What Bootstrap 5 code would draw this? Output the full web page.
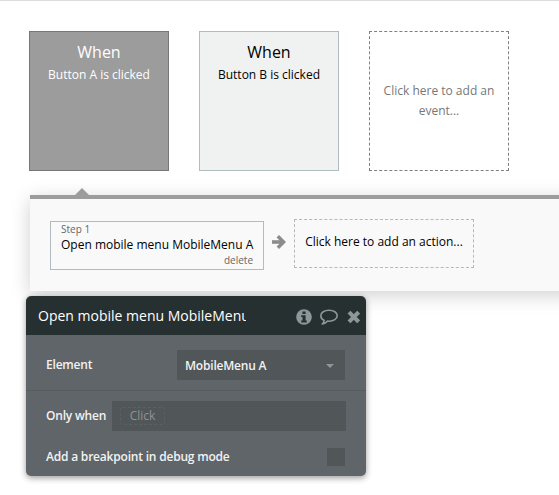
<!DOCTYPE html>
<html lang="en">
<head>
<meta charset="utf-8">
<meta name="viewport" content="width=device-width, initial-scale=1">
<title>Workflow editor</title>
<link href="https://cdn.jsdelivr.net/npm/bootstrap@5.3.0/dist/css/bootstrap.min.css" rel="stylesheet">
<style>
body{font-family:"Open Sans",sans-serif;font-size:12px;line-height:20px;color:#000;background:#fff;height:495px;overflow:hidden;border-top:1px solid #ddd}
.events{gap:30px;padding:30px 0 0 29px}
.event{width:140px;height:140px;border:1px solid #b1bcc0;background:#f0f2f1;padding-top:9px}
.event.active{background:#9c9c9c;border-color:#777;color:#fff}
.event.new{background:#fff;border:1px dashed #808080;color:#777;padding:0 10px}
.event-title{font-size:16px;line-height:22px}
.event-text{line-height:22px;margin-top:1px}
.caret-row{height:24px;padding-left:75px}
.caret-up{width:14px;height:7px;background:#9c9c9c;clip-path:polygon(50% 0,100% 100%,0 100%)}
.actions{margin-left:30px;margin-right:-20px;height:96px;border-top:4px solid #9c9c9c;background:#f9f9f9;box-shadow:0 4px 18px rgba(0,0,0,.19);padding:20px 0 0 20px}
.step{width:214px;height:49px;border:1px solid #b1bcc0;margin-top:2px;padding:0 10px}
.step-no{font-size:10px;line-height:15px;color:#666}
.step-name{line-height:16px}
.step-del{font-size:10px;line-height:14px;color:#666}
.arrow{width:30px;height:45px}
.step-new{width:180px;height:49px;border:1px dashed #b5b9bb}
.editor{width:340px;height:180px;margin:5px 0 0 26px;border-radius:5px;background:#5f6568;box-shadow:0 2px 6px rgba(0,0,0,.4);color:#f2f2f2;font-weight:600;letter-spacing:-.2px}
.editor-head{height:39px;background:#273031;padding:0 6px 0 12px;color:#fff;font-weight:400;letter-spacing:0}
.editor-title{font-size:14px;width:208px}
.editor-tools{padding-top:2px}
.editor-row{padding-left:20px;padding-right:21px}
.row-element{height:56px;border-bottom:1px solid #565b5e;padding-top:5px}
.row-when{height:50px;padding-right:20px}
.row-break{height:32px}
.pick{width:168px;height:30px;background:#515658;padding:2px 11px 0 8px}
.expr{width:234px;height:30px;background:#515658;padding-left:8px}
.expr span{width:45px;height:18px;border:1px dashed #5b6063;border-radius:3px;color:#929292;font-weight:400;letter-spacing:0}
.tick{width:18px;height:18px;background:#515658}
</style>
<script src="https://cdn.jsdelivr.net/npm/bootstrap@5.3.0/dist/js/bootstrap.bundle.min.js"></script>
</head>
<body>
<div class="events d-flex">
  <div class="event active text-center"><div class="event-title">When</div><div class="event-text">Button A is clicked</div></div>
  <div class="event text-center"><div class="event-title">When</div><div class="event-text">Button B is clicked</div></div>
  <div class="event new text-center d-flex align-items-center justify-content-center">Click here to add an event...</div>
</div>
<div class="caret-row d-flex align-items-end"><div class="caret-up"></div></div>
<div class="actions d-flex align-items-start">
  <div class="step">
    <div class="step-no">Step 1</div>
    <div class="step-name text-nowrap">Open mobile menu MobileMenu A</div>
    <div class="step-del text-end">delete</div>
  </div>
  <div class="arrow d-flex align-items-center justify-content-center">
    <svg width="14" height="14" viewBox="0 0 14 14" fill="none" stroke="#8c8c8c"><path d="M0 7h11" stroke-width="3.6"/><path d="M5.800 1.200L11.600 7l-5.800 5.800" stroke-width="3.400"/></svg>
  </div>
  <div class="step-new d-flex align-items-center justify-content-center text-nowrap"><span class="pb-1">Click here to add an action...</span></div>
</div>
<div class="editor">
  <div class="editor-head d-flex align-items-center rounded-top position-relative">
    <div class="editor-title text-nowrap overflow-hidden">Open mobile menu MobileMenu A</div>
    <div class="editor-tools d-flex align-items-center ms-auto">
      <svg width="16" height="16" viewBox="0 0 16 16"><circle cx="8" cy="8" r="7.8" fill="#8d979a"/><path d="M6.400 2.500h3.200v2.400H6.400zM5.200 6.200h4.400v5.200h1.200v2H5.200v-2h1.300V8.100H5.200z" fill="#273031"/></svg>
      <svg class="ms-2" width="18" height="16" viewBox="0 0 18 16" fill="none" stroke="#8d979a" stroke-width="1.600" stroke-linejoin="round"><path d="M9 1.200c4.600 0 8.200 2.400 8.200 5.500s-3.600 5.500-8.200 5.500l-1.500-.1C6 13.600 4.200 14.800 2.200 15c1.100-1 1.800-2 2-3.600C2.100 10.400.8 8.700.8 6.700.8 3.600 4.400 1.200 9 1.200z"/></svg>
      <svg width="22" height="14" viewBox="-9 0 22 14" stroke="#8d979a" stroke-width="4"><path d="M2 2.200l9.600 9.600M11.600 2.200L2 11.800"/></svg>
    </div>
  </div>
  <div class="editor-row row-element d-flex align-items-center justify-content-between">
    <span>Element</span>
    <div class="pick d-flex align-items-center justify-content-between"><span>MobileMenu A</span><svg width="8" height="4"><path d="M0 0h8L4 4z" fill="#8d979a"/></svg></div>
  </div>
  <div class="editor-row row-when d-flex align-items-center justify-content-between">
    <span>Only when</span>
    <div class="expr d-flex align-items-center"><span class="d-flex align-items-center justify-content-center">Click</span></div>
  </div>
  <div class="editor-row row-break d-flex align-items-center justify-content-between">
    <span>Add a breakpoint in debug mode</span>
    <div class="tick"></div>
  </div>
</div>
</body>
</html>
